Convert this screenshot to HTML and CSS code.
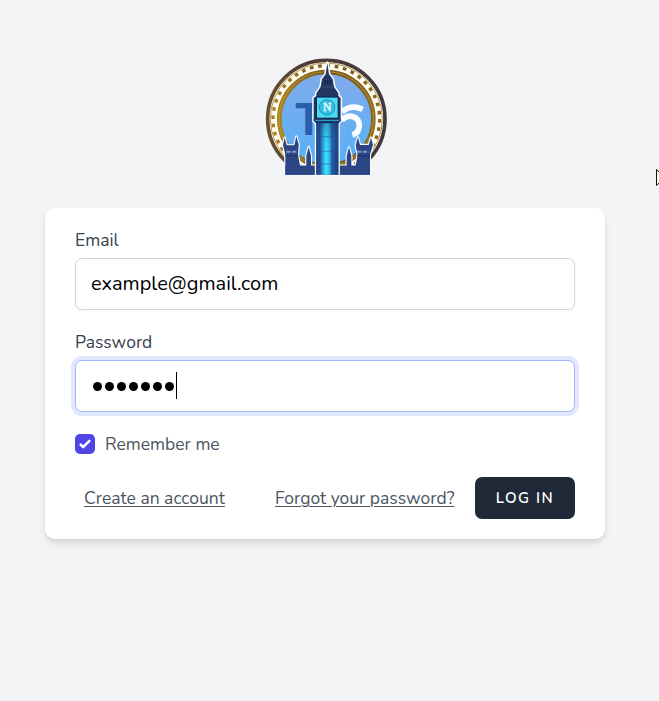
FILE: index.html
```html
<!DOCTYPE html>
<html lang="en">
<head>
<meta charset="utf-8">
<title>Log in</title>
<link rel="stylesheet" href="styles.css">
</head>
<body>
<main class="page">
  <svg class="logo" viewBox="0 0 420 405" aria-hidden="true">
    <defs>
      <linearGradient id="rim" x1="0" y1="0" x2="1" y2="0"><stop offset="0" stop-color="#68502f"/><stop offset=".3" stop-color="#513d35"/><stop offset="1" stop-color="#42383f"/></linearGradient>
      <linearGradient id="gold" x1="0" y1="0" x2="1" y2="0"><stop offset="0" stop-color="#a8821e"/><stop offset=".5" stop-color="#74551b"/><stop offset="1" stop-color="#8b681d"/></linearGradient>
      <linearGradient id="sky" x1="0" y1="0" x2="0" y2="1"><stop offset="0" stop-color="#82aaeb"/><stop offset="1" stop-color="#55b1f8"/></linearGradient>
      <linearGradient id="shaft" x1="0" y1="0" x2="1" y2="0"><stop offset="0" stop-color="#203d80"/><stop offset=".22" stop-color="#2b60aa"/><stop offset=".3" stop-color="#24a9de"/><stop offset=".45" stop-color="#48e2f6"/><stop offset=".6" stop-color="#2bb5e3"/><stop offset=".72" stop-color="#285ea8"/><stop offset="1" stop-color="#203a7c"/></linearGradient>
      <linearGradient id="shade" x1="0" y1="0" x2="0" y2="1"><stop offset="0" stop-color="#1c376d" stop-opacity=".4"/><stop offset=".6" stop-color="#1bb3e8" stop-opacity="0"/></linearGradient>
      <clipPath id="base"><path d="M0 0H420V346H342V374H88V346H0Z"/></clipPath>
    </defs>
    <g clip-path="url(#base)">
      <circle cx="211" cy="207" r="176" fill="#fffdf2" stroke="url(#rim)" stroke-width="11"/>
      <circle cx="211" cy="207" r="168" fill="none" stroke="#b39650" stroke-width="3"/>
      <circle cx="211" cy="207" r="160" fill="none" stroke="url(#gold)" stroke-width="10" stroke-dasharray="11 14.1"/>
      <circle cx="211" cy="207" r="141" fill="url(#sky)" stroke="url(#gold)" stroke-width="14"/>
      <circle cx="211" cy="207" r="142" fill="none" stroke="#c9a648" stroke-width="2"/>
    </g>
    <text class="logo-t" x="117" y="256" textLength="82" lengthAdjust="spacingAndGlyphs">T</text>
    <path d="M258 186Q285 162 320 178M257 211C280 188 310 200 310 228Q309 249 289 255" fill="none" stroke="#f8fcff" stroke-width="17"/>
    <g fill="#2b4585" stroke="#f4fbff" stroke-width="7" paint-order="stroke" stroke-linejoin="round">
      <path d="M88 374V313L81 285L86 263L92 286H115L121 259L128 283L126 314L132 347H151V318L158 291L165 318V347H188V374Z"/>
      <path d="M342 374V313L351 285L345 263L338 285H312L306 262L299 286L305 315L299 347H286V318L279 292L272 318V347H242V374Z"/>
    </g>
    <path d="M88 374V347H342V374Z" fill="#2b4585"/>
    <path d="M91 305H122M303 305H338" stroke="#7f9bc3" stroke-width="6" stroke-dasharray="13 4"/>
    <path d="M88 317H126M303 317H342" stroke="#203771" stroke-width="4"/>
    <path d="M214 39L219 73L230 87L234 111L247 130V139L254 144V212L247 220V374H181V220L173 212V144L181 139V130L194 111L198 87L209 73Z" fill="#23375f" stroke="#fafdff" stroke-width="9" paint-order="stroke" stroke-linejoin="round"/>
    <path d="M181 215H247V374H181Z" fill="url(#shaft)"/>
    <path d="M181 215H247V374H181Z" fill="url(#shade)"/>
    <path d="M190 220V370M227 220V374M239 220V370" stroke="#163a77" stroke-width="2" opacity=".5"/>
    <path d="M181 260H247M181 304H247M181 342H247" stroke="#214f96" stroke-width="2" opacity=".7"/>
    <path d="M200 88H229M193 111H235" stroke="#405a87" stroke-width="2"/>
    <path d="M207 88V102M215 88V102M223 88V102" stroke="#12244a" stroke-width="4"/>
    <path d="M171 209H257L248 220H181Z" fill="#193468"/>
    <path d="M178 211H250" stroke="#2bb7db" stroke-width="3"/>
    <rect x="181" y="141" width="66" height="64" fill="#48dcf4" stroke="#122c56" stroke-width="4"/>
    <circle cx="213" cy="172" r="23" fill="#35bfe0" stroke="#1d90b6" stroke-width="3"/>
    <text class="logo-n" x="214" y="184" text-anchor="middle">N</text>
  </svg>

  <form class="card">
    <label class="label" for="email">Email</label>
    <input class="field" id="email" type="text" value="example@gmail.com">

    <div class="label label-next">Password</div>
    <div class="field field-focus">
      <i class="dot"></i><i class="dot"></i><i class="dot"></i><i class="dot"></i><i class="dot"></i><i class="dot"></i><i class="dot"></i><i class="caret"></i>
    </div>

    <div class="remember">
      <span class="check"><svg viewBox="0 0 16 16"><path d="M12.207 4.793a1 1 0 0 1 0 1.414l-5 5a1 1 0 0 1-1.414 0l-2-2a1 1 0 0 1 1.414-1.414L6.5 9.086l4.293-4.293a1 1 0 0 1 1.414 0z" fill="#fff"/></svg></span>
      <span class="remember-text">Remember me</span>
    </div>

    <div class="actions">
      <a class="link create">Create an account</a>
      <a class="link forgot">Forgot your password?</a>
      <button class="submit" type="button">LOG IN</button>
    </div>
  </form>
</main>
<svg class="pointer" viewBox="0 0 12 19"><path d="M.5.5V16.5L4.5 12.7L7 17.5L9 16.5L6.8 11.5H12Z" fill="#fff" stroke="#111" stroke-width="1"/></svg>
</body>
</html>
```
FILE: styles.css
```css
* { box-sizing: border-box; }

body {
  margin: 0;
  height: 701px;
  overflow: hidden;
  background: #f3f4f6;
  font-family: Nunito, Lato, sans-serif;
  font-size: 17.5px;
  line-height: 25px;
  color: #374151;
}

.page {
  width: 650px;
  padding-top: 50px;
  display: flex;
  flex-direction: column;
  align-items: center;
}

.logo { display: block; width: 140px; height: 135px; margin-left: 2px; }
.logo-t { font: 900 132px Lato, sans-serif; fill: #2860ad; }
.logo-n { font: 400 35px "Liberation Serif", serif; fill: #f1ffff; stroke: #f1ffff; stroke-width: 1px; }

.card {
  width: 560px;
  height: 331px;
  margin-top: 23px;
  padding: 20px 30px;
  background: #fff;
  border-radius: 10px;
  box-shadow: 0 5px 8px -1px rgba(0, 0, 0, .1), 0 3px 5px -1px rgba(0, 0, 0, .07);
}

.label { display: block; height: 25px; }
.label-next { margin-top: 20px; }

.field {
  display: flex;
  align-items: center;
  width: 500px;
  height: 52px;
  margin: 5px 0 0;
  padding: 0 15px 2px;
  border: 1px solid #d1d5db;
  border-radius: 7px;
  background: #fff;
  box-shadow: 0 1px 2px rgba(0, 0, 0, .05);
  color: #000;
  font: 20px Nunito, Lato, sans-serif;
  outline: none;
}

.field-focus {
  padding-bottom: 1px;
  border-color: #a5b4fc;
  box-shadow: 0 0 0 4px #e0e7ff;
}

.dot { width: 9px; height: 9px; margin: 2px 1.5px 0 1.5px; border-radius: 50%; background: #000; }
.caret { width: 1px; height: 27px; margin-left: .5px; background: #000; }

.remember { display: flex; align-items: center; height: 25px; margin-top: 20px; color: #4b5563; }
.check { width: 20px; height: 20px; margin-bottom: 1px; border-radius: 5px; background: #4f46e5; }
.check svg { display: block; width: 20px; height: 20px; }
.remember-text { margin-left: 10px; }

.actions { display: flex; align-items: center; margin-top: 20px; padding-left: 9px; color: #4b5563; }
.link { white-space: nowrap; text-decoration: underline; text-decoration-thickness: 1px; text-underline-offset: 2px; }
.create { width: 141px; }
.forgot { width: 180px; margin-left: 50px; }

.submit {
  width: 100px;
  height: 42px;
  margin: 0 0 0 20px;
  padding: 0;
  border: 0;
  border-radius: 7px;
  background: #1f2937;
  color: #fff;
  font: 600 15px Nunito, Lato, sans-serif;
  letter-spacing: 1.5px;
}

.pointer { position: absolute; left: 656px; top: 169px; width: 12px; height: 19px; }
```
